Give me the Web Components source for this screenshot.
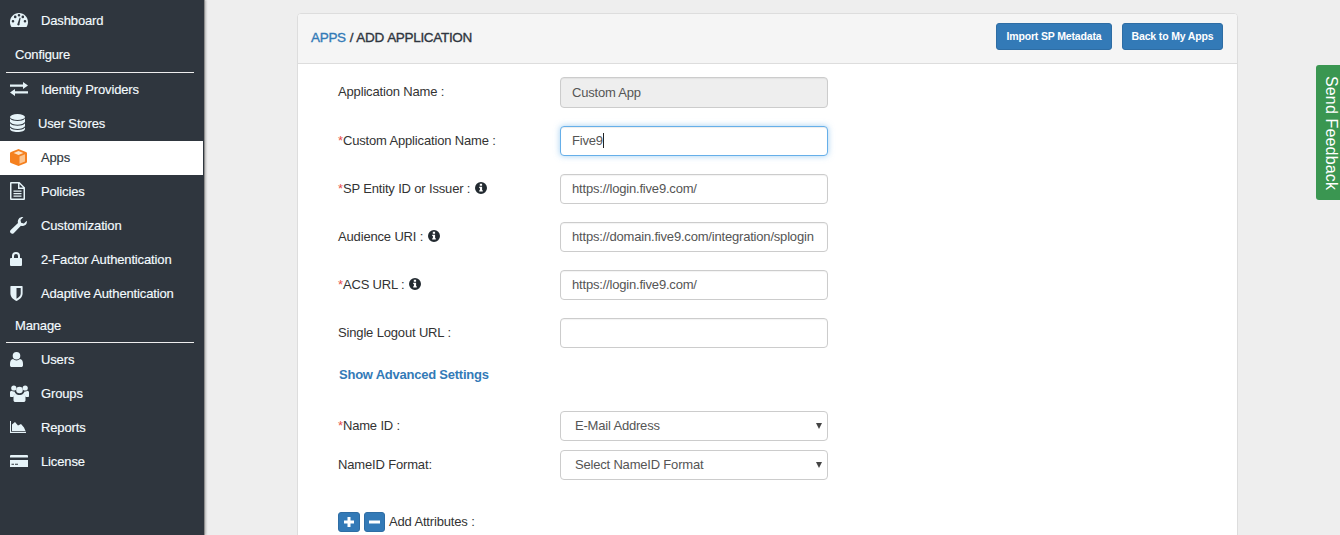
<!DOCTYPE html>
<html><head><meta charset="utf-8">
<style>
html,body{margin:0;padding:0;height:535px;overflow:hidden;background:#eee;font-family:"Liberation Sans",Arial,sans-serif}
a{color:#337ab7}
</style></head><body>
<x-app>
  <x-sidebar slot="side">
    <x-nav icon="dash" style="margin-top:4px">Dashboard</x-nav>
    <x-heading>Configure</x-heading>
    <x-nav icon="exchange">Identity Providers</x-nav>
    <x-nav icon="db" tight>User Stores</x-nav>
    <x-nav icon="cube" active>Apps</x-nav>
    <x-nav icon="file">Policies</x-nav>
    <x-nav icon="wrench">Customization</x-nav>
    <x-nav icon="lock">2-Factor Authentication</x-nav>
    <x-nav icon="shield">Adaptive Authentication</x-nav>
    <x-heading second>Manage</x-heading>
    <x-nav icon="user">Users</x-nav>
    <x-nav icon="group">Groups</x-nav>
    <x-nav icon="chart">Reports</x-nav>
    <x-nav icon="card">License</x-nav>
  </x-sidebar>
  <x-card>
    <span slot="title"><a>APPS</a> / ADD APPLICATION</span>
    <x-btn slot="actions" style="width:116px">Import SP Metadata</x-btn>
    <x-btn slot="actions" style="width:101px">Back to My Apps</x-btn>
    <x-row first><span slot="label">Application Name :</span><x-field disabled style="height:31px">Custom App</x-field></x-row>
    <x-row><span slot="label"><x-req></x-req>Custom Application Name :</span><x-field focus>Five9</x-field></x-row>
    <x-row><span slot="label"><x-req></x-req>SP Entity ID or Issuer : <x-info></x-info></span><x-field>https://login.five9.com/</x-field></x-row>
    <x-row><span slot="label">Audience URI : <x-info></x-info></span><x-field>https://domain.five9.com/integration/splogin</x-field></x-row>
    <x-row><span slot="label"><x-req></x-req>ACS URL : <x-info></x-info></span><x-field>https://login.five9.com/</x-field></x-row>
    <x-row><span slot="label">Single Logout URL :</span><x-field></x-field></x-row>
    <x-advanced>Show Advanced Settings</x-advanced>
    <x-row tight><span slot="label"><x-req></x-req>Name ID :</span><x-field select>E-Mail Address</x-field></x-row>
    <x-row tight><span slot="label">NameID Format:</span><x-field select>Select NameID Format</x-field></x-row>
    <x-attrs>Add Attributes :</x-attrs>
  </x-card>
  <x-feedback>Send Feedback</x-feedback>
</x-app>
<script>
const ICONS={
dash:'<svg width="18" height="14" viewBox="0 0 18 14"><path fill-rule="evenodd" fill="currentColor" d="M9 0C4 0 0 4 0 9c0 2 .6 3.700 1.500 5h15c.9-1.300 1.500-3 1.500-5 0-5-4-9-9-9zM3 9.500a1.300 1.300 0 1 1 0-2.600 1.300 1.300 0 0 1 0 2.600zM5.200 5.200a1.300 1.300 0 1 1 0-2.600 1.300 1.300 0 0 1 0 2.600zM9 3.500a1.300 1.300 0 1 1 0-2.600 1.300 1.300 0 0 1 0 2.600zM15 9.500a1.300 1.300 0 1 1 0-2.600 1.300 1.300 0 0 1 0 2.600zM12.800 5.200a1.300 1.300 0 1 1 0-2.600 1.300 1.300 0 0 1 0 2.600zM8.100 12.500a1.500 1.500 0 0 1-.4-2.300L9.700 4.600l.9.300-1 5.700a1.500 1.500 0 0 1-1.500 1.900z"/></svg>',
exchange:'<svg width="18" height="14" viewBox="0 0 18 14"><path fill="currentColor" d="M0 2.400h13V0l5 3.500-5 3.500V4.800H0z"/><path fill="currentColor" d="M18 9.200H5V7L0 10.500 5 14v-2.400h13z"/></svg>',
db:'<svg width="15" height="18" viewBox="0 0 15 18"><g fill="currentColor"><ellipse cx="7.500" cy="3" rx="7.500" ry="3"/><path d="M0 4.500C1.500 6.300 4.500 7 7.500 7s6-.7 7.500-2.500V8c-1 1.600-4 2.700-7.500 2.700S1 9.600 0 8z"/><path d="M0 9.300c1.500 1.800 4.500 2.500 7.500 2.500s6-.7 7.500-2.500v3c-1 1.600-4 2.700-7.500 2.700S1 13.900 0 12.300z"/><path d="M0 13.500C1.500 15.300 4.500 16 7.500 16s6-.7 7.500-2.500V15c0 1.700-3.400 3-7.500 3S0 16.700 0 15z"/></g></svg>',
cube:'<svg width="17" height="17" viewBox="0 0 17 17"><path fill="#f5801f" d="M8 .2a1.500 1.500 0 0 1 1 0l7 2.700a1.500 1.500 0 0 1 1 1.400v8.400a1.500 1.500 0 0 1-.9 1.400l-7 2.700a1.500 1.500 0 0 1-1.200 0l-7-2.700A1.500 1.500 0 0 1 0 12.700V4.300a1.500 1.500 0 0 1 1-1.400z"/><path fill="#fde2c6" d="M8.500 2L3.600 3.900l4.900 2 4.900-2z"/><path fill="#fbc48f" d="M9.500 7.400l5.500-2.200v7.400l-5.500 2.200z"/></svg>',
file:'<svg width="15" height="18" viewBox="0 0 15 18"><path fill-rule="evenodd" fill="currentColor" d="M1 0h8.500L15 5.500V17a1 1 0 0 1-1 1H1a1 1 0 0 1-1-1V1a1 1 0 0 1 1-1zM1.500 1.500v15h12V7H8V1.500zM9.500 2v3.500H13zM3.500 8.500h8v1.200h-8zM3.500 11h8v1.200h-8zM3.500 13.500h8v1.200h-8z"/></svg>',
wrench:'<svg width="17" height="17" viewBox="0 0 17 17"><path fill="currentColor" d="M16.800 3.800c.3 1.700-.3 3.300-1.500 4.300-1.300 1-3 1.300-4.400.7L3.700 16.200a2.200 2.200 0 0 1-3-.1 2.200 2.200 0 0 1 0-3L8 5.900C7.500 4.400 7.900 2.700 9 1.500 10.200.3 11.800-.2 13.400.1L10.500 3l.6 2.800 2.800.7z"/></svg>',
lock:'<svg width="12" height="14" viewBox="0 0 12 14"><path fill-rule="evenodd" fill="currentColor" d="M2 6V4a4 4 0 0 1 8 0v2h1a1 1 0 0 1 1 1v6a1 1 0 0 1-1 1H1a1 1 0 0 1-1-1V7a1 1 0 0 1 1-1zM4 6h4V4a2 2 0 0 0-4 0z"/></svg>',
shield:'<svg width="13" height="15" viewBox="0 0 13 16"><path fill-rule="evenodd" fill="currentColor" d="M.5 0h12a.5.5 0 0 1 .5.500V8c0 4-3.500 6.700-6.500 8C3.500 14.700 0 12 0 8V.5A.5.500 0 0 1 .5 0zM6.500 2v11.600C8.800 12.500 11 10.500 11 8V2z"/></svg>',
user:'<svg width="13" height="15" viewBox="0 0 13 15"><path fill="currentColor" d="M6.500 0a3.800 3.800 0 1 1 0 7.600 3.800 3.800 0 0 1 0-7.600zM3 7c1 .9 2.200 1.400 3.500 1.400S9 7.900 10 7c2 .3 3 2 3 5v1.200c0 1-.7 1.800-1.800 1.800H1.800C.7 15 0 14.200 0 13.200V12c0-3 1-4.700 3-5z"/></svg>',
group:'<svg width="19" height="17" viewBox="0 0 19 17"><g fill="currentColor"><circle cx="3.800" cy="3" r="2.600"/><circle cx="15.200" cy="3" r="2.600"/><circle cx="9.500" cy="5" r="3.300"/><path d="M0 7.500c0-1 .8-1.700 1.500-1.700 1 .6 1.800.8 3 .6.300 1 .8 1.800 1.500 2.400C4.500 9.500 3.700 11 3.500 12H1c-.6 0-1-.4-1-1zM19 7.500c0-1-.8-1.700-1.500-1.700-1 .6-1.800.8-3 .6-.3 1-.8 1.800-1.500 2.400 1.500.700 2.300 2.200 2.500 3.200H18c.6 0 1-.4 1-1z"/><path d="M6 8.700c1 1 2.200 1.400 3.500 1.400S12 9.700 13 8.700c1.500.3 2.500 1.600 2.500 3.800v2.700c0 1-.8 1.800-2 1.800h-8c-1.200 0-2-.8-2-1.800v-2.700c0-2.200 1-3.500 2.500-3.800z"/></g></svg>',
chart:'<svg width="16" height="12" viewBox="0 0 16 12"><path fill="currentColor" d="M1 0v10.800h15V12H0V0zM2 10V3.500L5 1l3 3.500L11 3l3 3.500 1.500 3.500z"/></svg>',
card:'<svg width="18" height="12" viewBox="0 0 18 12"><path fill-rule="evenodd" fill="currentColor" d="M1 0h16a1 1 0 0 1 1 1v1.500H0V1a1 1 0 0 1 1-1zM0 5h18v7H0zM1.500 8.800v1h2.500v-1zM5 8.800v1h3v-1z"/></svg>'
};
function def(name,css,html){
  customElements.define(name,class extends HTMLElement{
    connectedCallback(){
      if(this.shadowRoot)return;
      const r=this.attachShadow({mode:'open'});
      r.innerHTML='<style>'+css+'</style>'+(typeof html==='function'?html(this):html);
    }
  });
}
def('x-app',`:host{display:flex;height:535px;position:relative;overflow:hidden}
main{flex:1;min-width:0;padding:13px 0 0 92px}`,'<slot name="side"></slot><main><slot></slot></main>');
def('x-sidebar',`:host{display:block;width:204px;height:535px;background:#2f363e;border-right:1px solid #8d8d8d;box-shadow:1px 0 2px rgba(0,0,0,.25);flex:none}`,'<slot></slot>');
def('x-nav',`:host{display:flex;align-items:center;height:34px;width:203px;box-sizing:border-box;padding-bottom:2px;color:#f4fbff;font-size:13px;letter-spacing:-.14px;-webkit-text-stroke:.15px currentColor}
:host([active]){background:#fff;color:#2f363e}
.i{width:41px;flex:none;display:flex;justify-content:flex-start;padding-left:10px;box-sizing:border-box;color:#e6f3f8}
:host([tight]) .i{width:38px}
svg{display:block}`,el=>`<span class="i">${ICONS[el.getAttribute('icon')]}</span><span><slot></slot></span>`);
def('x-heading',`:host{display:flex;align-items:center;height:35px;margin:0 10px 0 6px;padding:0 0 2px 9px;box-sizing:border-box;color:#f4fbff;font-size:13px;letter-spacing:-.14px;-webkit-text-stroke:.15px currentColor;border-bottom:1px solid #eee}
:host([second]){height:32px;padding-bottom:3px}`,'<slot></slot>');
def('x-card',`:host{display:block;width:941px;height:560px;box-sizing:border-box;background:#fff;border:1px solid #ddd;border-radius:4px;color:#333}
header{display:flex;align-items:center;justify-content:space-between;height:50px;box-sizing:border-box;background:#f5f5f5;border-bottom:1px solid #ddd;padding:0 14px 4px 13px;border-radius:3px 3px 0 0;font-size:13.500px;letter-spacing:-.31px;word-spacing:.5px;-webkit-text-stroke:.35px currentColor}
.actions{display:flex;gap:10px;word-spacing:0}
.body{padding:13px 0 0 40px}
::slotted([slot=title]){color:#2f3640;margin-top:2px}`,`<header><slot name="title"></slot><div class="actions"><slot name="actions"></slot></div></header><div class="body"><slot></slot></div>`);
def('x-btn',`:host{display:flex;align-items:center;justify-content:center;height:27px;box-sizing:border-box;padding-bottom:1px;background:#337ab7;border:1px solid #2e6da4;border-radius:3px;color:#fff;font-size:10.500px;font-weight:bold;letter-spacing:-.15px;-webkit-text-stroke:0}`,'<slot></slot>');
def('x-row',`:host{display:grid;grid-template-columns:222px 268px;align-items:center;margin-bottom:18px;font-size:13px;letter-spacing:-.16px;color:#333;-webkit-text-stroke:0}
:host([tight]){margin-bottom:9px}
:host([first]) .l{margin-top:-3px}
.l{display:block;margin-top:-2px}`,'<span class="l"><slot name="label"></slot></span><slot></slot>');
def('x-req',`:host{display:inline;color:#e8504c}`,'*');
def('x-info',`:host{display:inline-block;width:12px;height:12px;vertical-align:-1px;margin-left:1px}svg{display:block}`,'<svg width="12" height="12" viewBox="0 0 12 12"><path fill-rule="evenodd" fill="#222a30" d="M6 0a6 6 0 1 1 0 12A6 6 0 0 1 6 0zM4.800 1.800v1.900h2.300V1.800zM4.200 4.800v1.100h.7v2.400h-.7v1.100h3.600V8.300h-.7V4.800z"/></svg>');
def('x-field',`:host{display:flex;align-items:center;height:30px;box-sizing:border-box;border:1px solid #ccc;border-radius:4px;background:#fff;padding:0 11px 1px;font-size:13px;letter-spacing:-.19px;color:#555;box-shadow:inset 0 1px 1px rgba(0,0,0,.05);position:relative;white-space:nowrap}
:host([disabled]){background:#eee}
:host([focus]){border-color:#66afe9;box-shadow:inset 0 1px 1px rgba(0,0,0,.075),0 0 6px rgba(102,175,233,.6)}
:host([focus]) .t::after{content:"";display:inline-block;width:1px;height:15px;background:#222;vertical-align:-3px}
:host([select]){padding-left:14px;box-shadow:none}
.a{position:absolute;right:5px;top:11px;width:0;height:0;border:3.500px solid transparent;border-top:6px solid #444;border-bottom:0}`,
el=>`<span class="t"><slot></slot></span>`+(el.hasAttribute('select')?'<span class="a"></span>':''));
def('x-advanced',`:host{display:block;height:45px;padding:1px 0 0 1px;font-size:13px;font-weight:bold;letter-spacing:-.23px;color:#337ab7;line-height:16px;box-sizing:border-box}`,'<slot></slot>');
def('x-attrs',`:host{display:flex;align-items:center;gap:4px;margin-top:32px;font-size:13px;letter-spacing:-.16px;color:#333}
span{margin-top:-1px}
b{display:flex;align-items:center;justify-content:center;height:20px;box-sizing:border-box;background:#337ab7;border:1px solid #2e6da4;border-radius:3px}
svg{display:block}`,`<b style="width:22px"><svg width="12" height="12" viewBox="0 0 12 12"><path fill="#fff" d="M4.500 1h3v3.500H11v3H7.500V11h-3V7.500H1v-3h3.500z"/></svg></b><b style="width:21px"><svg width="11" height="4" viewBox="0 0 11 4"><rect y=".5" width="11" height="3" fill="#fff"/></svg></b><span><slot></slot></span>`);
def('x-feedback',`:host{position:absolute;right:0;top:65px;width:24px;height:135px;box-sizing:border-box;padding:1px 0 0 5px;background:#3a9651;border-radius:3px 0 0 3px;color:#fff;font-size:16px;letter-spacing:.15px;writing-mode:vertical-rl;display:flex;align-items:center;justify-content:center;white-space:nowrap}`,'<slot></slot>');
</script>
</body></html>
